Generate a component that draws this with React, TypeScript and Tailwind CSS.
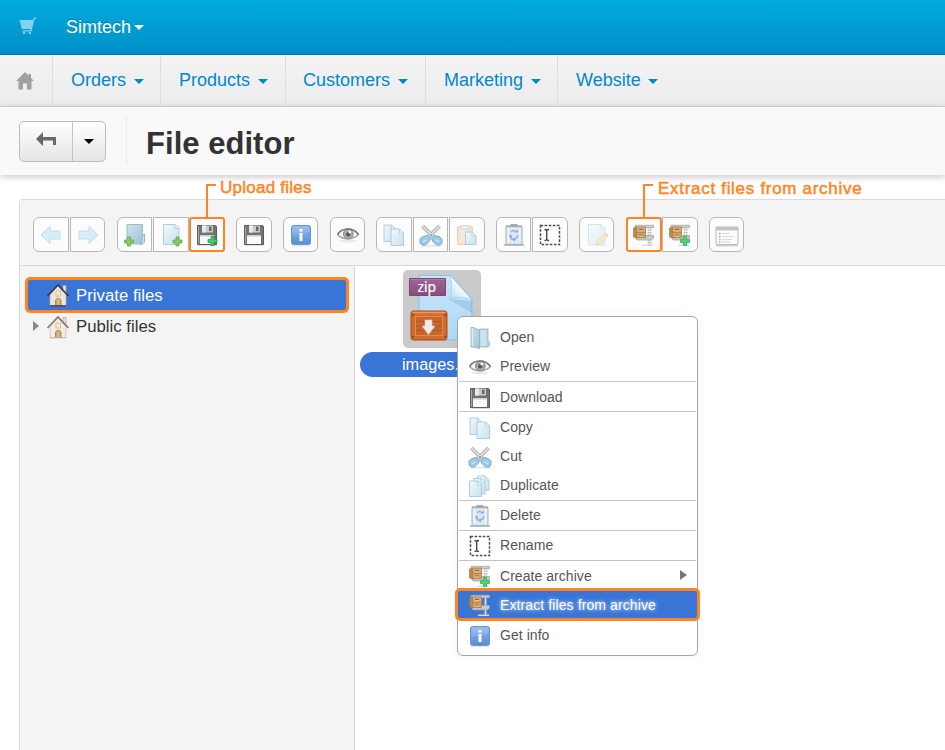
import React from "react";

type IconName =
  | "back" | "forward" | "folderAdd" | "fileAdd" | "upload" | "save" | "info" | "eye" | "copy" | "cut" | "paste"
  | "trash" | "rename" | "edit" | "extract" | "archive" | "list" | "open" | "duplicate";

function Plus({ x, y, fill = "#86c865", stroke = "#66a64c" }: { x: number; y: number; fill?: string; stroke?: string }) {
  return (
    <path
      transform={`translate(${x} ${y})`}
      d="M3.500 .5h3v3h3v3h-3v3h-3v-3h-3v-3h3z"
      fill={fill}
      stroke={stroke}
      strokeWidth=".8"
      strokeLinejoin="round"
    />
  );
}

function Floppy() {
  return (
    <g>
      <path d="M3 22.500h19" stroke="#ddd" />
      <path d="M2.500 2.500h18l1 1v18h-19z" fill="#727272" stroke="#5c5c5c" />
      <path d="M3.500 3.500v17" stroke="#a9a9a9" />
      <path d="M7 2.500h11v7H7z" fill="#c9c9c9" />
      <path d="M7 2.500h4v7H7z" fill="#e9e9e9" />
      <path d="M14 3.500h2.500V8H14z" fill="#666" />
      <path d="M5 12.500h14V21H5z" fill="#f7fafa" />
      <path d="M5 12.500h14V14H5z" fill="#dce6e6" />
    </g>
  );
}

function Sheet({ x, y, w = 12, h = 15 }: { x: number; y: number; w?: number; h?: number }) {
  return (
    <g transform={`translate(${x} ${y})`}>
      <path d={`M.5 .5H${w - 4}L${w} 4.500V${h}H.5z`} fill="url(#paper)" stroke="#a9c9dd" strokeWidth=".9" />
      <path d={`M${w - 4} .5V4.500H${w}z`} fill="#fafdff" stroke="#a9c9dd" strokeWidth=".8" />
    </g>
  );
}

function Clamp() {
  return (
    <g>
      <path d="M10 22.300h11" stroke="#dcdcdc" strokeWidth="1.500" />
      <path d="M17.500 4v18" stroke="#9b9d9f" strokeWidth="3.600" strokeDasharray="1.200 1.300" />
      <path d="M17.500 4v18" stroke="#e4e4e4" strokeWidth="1.400" />
      <path d="M3 2.300h18.500v2.400H3z" fill="#d0d0d0" stroke="#a0a0a0" strokeWidth=".7" />
      <path d="M3.500 14.500H12l1.500-2h8v2.500l-2 2H5z" fill="#c8cacb" stroke="#989b9d" strokeWidth=".7" />
      <path d="M1.500 5l3-1v11l-3-1z" fill="#b98a50" stroke="#a0703a" strokeWidth=".6" />
      <rect x="4.500" y="4" width="9" height="5.300" fill="#d8ab70" stroke="#ad7e48" strokeWidth=".8" />
      <rect x="4.500" y="9.300" width="9" height="5.400" fill="#d3a469" stroke="#ad7e48" strokeWidth=".8" />
      <path d="M7 6.700h4M7 12h4" stroke="#8b6433" strokeWidth="1.200" />
      <path d="M7 7.800h4M7 13.100h4" stroke="#f2ddb4" strokeWidth=".8" />
    </g>
  );
}

const ARROW = "M2 12L11 3.500V8h10v8H11v4.500z";

const ICONS: Record<IconName, React.ReactNode> = {
  back: <path d={ARROW} fill="#d8edf8" stroke="#bbdff0" />,
  forward: <path d={ARROW} fill="#d8edf8" stroke="#bbdff0" transform="translate(24 0) scale(-1 1)" />,
  folderAdd: (
    <g>
      <path d="M4 1.500h15.500v19.500H4z" fill="url(#folder)" stroke="#94b9cd" strokeWidth=".9" />
      <path d="M17 21.500c2-1 1.500-6 2-8.500l2.500-2v8l-2.500 2.500z" fill="#c5dce8" stroke="#8aafc5" strokeWidth=".9" />
      <Plus x={1} y={13.500} />
    </g>
  ),
  fileAdd: (
    <g>
      <Sheet x={4} y={1} w={16} h={20.500} />
      <Plus x={13.500} y={13.500} />
    </g>
  ),
  upload: (
    <g>
      <Floppy />
      <Plus x={12.500} y={13} fill="#40c873" stroke="#22a04f" />
    </g>
  ),
  save: <Floppy />,
  info: (
    <g>
      <path d="M3 22.800h18" stroke="#dce3ea" />
      <rect x="2.500" y="2.500" width="19" height="19" rx="2" fill="url(#blue)" stroke="#6795d5" />
      <path d="M3.500 13c7 0 11-3 17-4V3.500h-17z" fill="#fff" opacity=".14" />
      <path d="M10.500 10H13.500v8h-3zM10.500 6h3v2.600h-3z" fill="#fff" />
    </g>
  ),
  eye: (
    <g>
      <ellipse cx="12" cy="18" rx="9" ry="1.500" fill="#e9e9e9" />
      <path d="M1.500 11.500C6 4.500 17 4 22.500 11.500C17 17 7 17.500 1.500 11.500z" fill="#f7f7f7" stroke="#a2a2a2" strokeWidth="1.300" />
      <circle cx="12.300" cy="11" r="4.900" fill="#a9a9b0" stroke="#85858c" strokeWidth=".9" />
      <circle cx="12.300" cy="11.300" r="2.200" fill="#55555d" />
      <circle cx="13.800" cy="9" r="1.500" fill="#f4f4f4" />
      <path d="M1.500 11.500C6 4.500 17 4 22.500 11.500" stroke="#787878" strokeWidth="1.400" />
    </g>
  ),
  copy: (
    <g>
      <Sheet x={1.500} y={1.500} w={12} h={17} />
      <Sheet x={8.500} y={5.500} w={13} h={17} />
    </g>
  ),
  cut: (
    <g>
      <path d="M3 22.800h19" stroke="#dce4e9" strokeWidth="1.500" />
      <path d="M3.500 3l13 13M20.500 3L7.500 16" stroke="#a5a5a5" strokeWidth="3.800" />
      <path d="M3.500 3l13 13M20.500 3L7.500 16" stroke="#dedede" strokeWidth="2" />
      <path d="M8.500 12.500l3 3-1.500 3-3.500 3.500H3l-2-2V16l3-2.500zM15.500 12.500l-3 3 1.500 3 3.500 3.500H21l2-2V16l-3-2.500z" fill="#9ccbe6" stroke="#76acce" strokeLinejoin="round" />
      <path d="M4.500 18.500l2.500-1.500M19.500 18.500L17 17" stroke="#d3e9f5" strokeWidth="1.200" strokeLinecap="round" />
      <circle cx="12" cy="12" r=".9" fill="#888" />
    </g>
  ),
  paste: (
    <g>
      <rect x="2.500" y="3.500" width="15" height="18" rx="1" fill="#f5dfcb" stroke="#ebd0b8" />
      <rect x="4.500" y="5.500" width="11" height="14" fill="#f8e8da" />
      <path d="M6 2.500h8V6H6z" fill="#eee" stroke="#dfdad5" />
      <Sheet x={10} y={8.500} w={11} h={13} />
    </g>
  ),
  trash: (
    <g>
      <path d="M2 22h20" stroke="#b5b9bc" strokeWidth="1.800" />
      <path d="M4 3.500h16v18H4z" fill="#dbe9f3" stroke="#a4b0b8" />
      <path d="M4 3.300h16" stroke="#a6acae" strokeWidth="1.800" />
      <path d="M8.500 2h7" stroke="#8f9698" strokeWidth="1.500" />
      <path d="M6 5v14M18 5v14" stroke="#f6fcff" />
      <path d="M9 9q3-3 5 0M15.500 12q.5 3.500-3.500 4M8.500 13q.5 3 2.500 3.500" stroke="#94b0e8" strokeWidth="1.600" />
      <path d="M12.500 9.500H16V6.500zM13 14l-3 2.500 3 2zM7 14l1.500-3 2 3z" fill="#8daae8" />
    </g>
  ),
  rename: (
    <g>
      <rect x="2.500" y="2.500" width="19" height="19" stroke="#4b4b4b" strokeWidth="1.500" strokeDasharray="2.600 1.500" />
      <path d="M6.500 6.500c1.500 0 2.200.5 2.200 1.500v8c0 1-.7 1.500-2.200 1.500M11 6.500c-1.500 0-2.300.5-2.300 1.500v8c0 1 .8 1.500 2.300 1.500" stroke="#3e3e3e" strokeWidth="1.300" />
    </g>
  ),
  edit: (
    <g opacity=".5">
      <Sheet x={3} y={1} w={17} h={21} />
      <path d="M11 22l1-4 8-7 2.500 2.500-8 7z" fill="#f6dea0" stroke="#ddb77b" />
      <path d="M20 11l2.500 2.500 1-1.500-2-2z" fill="#eaa59e" />
    </g>
  ),
  extract: <Clamp />,
  archive: (
    <g>
      <Clamp />
      <Plus x={12} y={13} fill="#4ed272" stroke="#36ad58" />
    </g>
  ),
  list: (
    <g>
      <path d="M1 22.800h22" stroke="#c7c7c4" strokeWidth="1.200" />
      <rect x="1" y="4" width="22" height="17.500" rx="1" fill="#fbfbfb" stroke="#b9b9b5" />
      <path d="M1 4h22v3.500H1z" fill="#c4c4bf" />
      <path d="M7 10.500h8M7 13.500h12M7 16.500h10M7 19h8" stroke="#d9d9d9" strokeWidth="1.100" />
      <path d="M4 10.500h1.500" stroke="#73c867" strokeWidth="1.500" />
      <path d="M4 13.500h1.500" stroke="#de8a7f" strokeWidth="1.500" />
      <path d="M4 16.500h1.500" stroke="#8fb4e0" strokeWidth="1.500" />
      <path d="M4 19h1.500" stroke="#a9a9a9" strokeWidth="1.300" />
    </g>
  ),
  open: (
    <g>
      <path d="M11.500 3h8.500v12l1.500 1v3.500l-1.500 1.500h-8.500z" fill="#b6d3e2" stroke="#93b8cb" strokeWidth=".8" />
      <path d="M12.500 4h6v16h-6z" fill="#cde2ed" />
      <path d="M3 1.500h2l6.500 2.500v18.500L5 21H3z" fill="url(#folder)" stroke="#8fb4c8" strokeWidth=".9" />
      <path d="M4.300 2.500v17.500" stroke="#e7f4fa" />
    </g>
  ),
  duplicate: (
    <g>
      <Sheet x={9} y={1.500} w={12} h={15} />
      <Sheet x={5} y={4} w={12} h={16} />
      <Sheet x={1} y={6.500} w={12.500} h={16} />
    </g>
  ),
};

function Icon({ name }: { name: IconName }) {
  return (
    <svg viewBox="0 0 24 24" className="block size-6 shrink-0" fill="none">
      {ICONS[name]}
    </svg>
  );
}

function Caret({ className = "" }: { className?: string }) {
  return (
    <svg viewBox="0 0 10 5" className={`block h-[5px] w-[10px] ${className}`}>
      <path d="M0 0h10L5 5z" fill="currentColor" />
    </svg>
  );
}

function HouseIcon({ light = false }: { light?: boolean }) {
  return (
    <svg viewBox="0 0 24 24" className="size-6" fill="none">
      <path d="M17 2.500h3v8h-3z" fill="#eee3d8" stroke="#a99890" strokeWidth=".7" />
      <path d="M4 11.500L12 3l8 8.500v11H4z" fill={light ? "#f6ece1" : "#f0e4d5"} stroke="#c4b1a2" strokeWidth=".6" />
      <path d="M1.500 13L12 2l10.500 11" stroke={light ? "#867579" : "#403548"} strokeWidth="1.600" />
      <path d="M10 8h4.500v5H10z" fill="#fbf5df" stroke="#c6b08d" strokeWidth=".8" />
      <path d="M12.200 8v5" stroke="#d5c6a9" strokeWidth=".6" />
      <path d="M9.500 22.500V17q2.800-3.500 5.500 0v5.500z" fill="#d0a672" stroke="#a98258" strokeWidth=".9" />
      <path d="M12.300 16v6" stroke="#edcda0" strokeWidth=".8" />
      <path d="M4 22.800h16" stroke={light ? "#c5b8ac" : "#55302a"} strokeWidth="1.100" />
    </svg>
  );
}

const NAV = [
  { label: "Orders", width: "w-[108px] pl-[18px]" },
  { label: "Products", width: "w-[125px] pl-[18px]" },
  { label: "Customers", width: "w-[140px] pl-[17px]" },
  { label: "Marketing", width: "w-[132px] pl-[18px]" },
  { label: "Website", width: "w-[120px] pl-[18px]" },
];

const TOOLS: { gap: string; icons: IconName[] }[] = [
  { gap: "", icons: ["back", "forward"] },
  { gap: "ml-3", icons: ["folderAdd", "fileAdd", "upload"] },
  { gap: "ml-[11px]", icons: ["save"] },
  { gap: "ml-[11px]", icons: ["info"] },
  { gap: "ml-3", icons: ["eye"] },
  { gap: "ml-[11px]", icons: ["copy", "cut", "paste"] },
  { gap: "ml-[11px]", icons: ["trash", "rename"] },
  { gap: "ml-[11px]", icons: ["edit"] },
  { gap: "ml-3", icons: ["extract", "archive"] },
  { gap: "ml-[11px]", icons: ["list"] },
];

const WIDTH: Partial<Record<IconName, string>> = {
  back: "w-[36px] mr-px", folderAdd: "w-[35px] mr-px", save: "w-[36px]", copy: "w-[36px] mr-px", cut: "w-[35px] mr-px",
  paste: "w-[36px]", trash: "w-[35px] mr-px", rename: "w-[36px]", fileAdd: "w-[36px]", upload: "w-[36px]",
  extract: "w-[36px]", archive: "w-[36px]",
};

function ToolButton({ name, first, last }: { name: IconName; first: boolean; last: boolean }) {
  const marked = name === "upload" || name === "extract";
  const border = marked ? "border-2 border-[#ff8522] rounded-[3px]" : "border border-[#b7b7b7]";
  const corners = marked ? "" : `${first ? "rounded-l-[6px]" : ""} ${last ? "rounded-r-[6px]" : ""}`;
  return (
    <button className={`flex h-[35px] shrink-0 items-center justify-center bg-[#fcfcfc] ${WIDTH[name] ?? "w-[35px]"} ${border} ${corners}`}>
      <Icon name={name} />
    </button>
  );
}

const MENU: { icon: IconName; label: string; row: string; line?: string }[] = [
  { icon: "open", label: "Open", row: "h-[29px]" },
  { icon: "eye", label: "Preview", row: "h-[29px]", line: "" },
  { icon: "save", label: "Download", row: "h-[29px] pt-[2px]", line: "" },
  { icon: "copy", label: "Copy", row: "h-[29px] pt-[2px]" },
  { icon: "cut", label: "Cut", row: "h-[29px] pt-[2px]" },
  { icon: "duplicate", label: "Duplicate", row: "h-[29px] pt-[2px]", line: "mt-px" },
  { icon: "trash", label: "Delete", row: "h-[29px]", line: "" },
  { icon: "rename", label: "Rename", row: "h-[29px]", line: "" },
  { icon: "archive", label: "Create archive", row: "mt-px h-[28px]" },
  { icon: "extract", label: "Extract files from archive", row: "" },
  { icon: "info", label: "Get info", row: "h-[29px]" },
];

function ContextMenu() {
  return (
    <div className="absolute left-[457px] top-[316px] z-10 h-[340px] w-[241px] rounded-[6px] border border-[#a6a6a6] bg-white pt-[6px] shadow-[0_0_12px_#0000000c]">
      {MENU.map((item) => {
        const active = item.icon === "extract";
        return (
          <React.Fragment key={item.label}>
            <div
              className={
                active
                  ? "relative -mx-[3px] -mt-[2px] flex h-[33px] items-center rounded-[5px] border-[3px] border-[#ff8522] bg-[#3875d7] pl-[10px] text-[14px] text-white [text-shadow:0_0_4px_#fff]"
                  : `flex items-center pl-[10px] text-[14px] tracking-[0.050px] text-[#555] ${item.row}`
              }
            >
              <Icon name={item.icon} />
              <span className={`ml-2 ${active ? "mt-[2px] tracking-[0.100px]" : ""}`}>{item.label}</span>
              {item.icon === "archive" && (
                <svg viewBox="0 0 7 10" className="mb-[2px] ml-auto mr-[10px] h-[10px] w-[7px]">
                  <path d="M0 0l7 5-7 5z" fill="#777" />
                </svg>
              )}
            </div>
            {item.line !== undefined && <div className={`ml-px mr-px h-px bg-[#c5c5c5] ${item.line}`} />}
          </React.Fragment>
        );
      })}
    </div>
  );
}

function ZipIcon() {
  return (
    <svg viewBox="0 0 78 78" className="size-[78px]">
      <path d="M16 5.500h32l21 23.500v41H16z" fill="url(#zipPaper)" stroke="#89bfe1" />
      <path d="M45 29l24 2v12z" fill="#5b9cc6" opacity=".28" />
      <path d="M47.500 5.500C49 17 49 25 46 29c8-3 15-2 23 1z" fill="url(#fold)" stroke="#9dc9e3" strokeWidth=".7" />
      <path d="M6.500 8.500h36v17h-36z" fill="url(#zipTag)" stroke="#7d4675" />
      <path d="M7 9.500h35" stroke="#ae7ba5" />
      <text x="14.500" y="22" fontSize="13.800" fontFamily="Noto Sans, sans-serif" fill="#fff" stroke="#fff" strokeWidth=".2">zip</text>
      <rect x="8" y="41" width="36" height="29" rx="2.500" fill="#d36b2d" stroke="#a84b1c" />
      <path d="M9.500 42.500h33" stroke="#f09a5b" strokeWidth="1.500" />
      <rect x="12.500" y="46.500" width="27" height="19" fill="#c6662c" stroke="#e4894c" />
      <path d="M13 51.500h26M13 56h26M13 60.500h26" stroke="#ad5321" strokeWidth=".8" />
      <path d="M9.500 45h1.500M41.500 45h1.500M9.500 67h1.500M41.500 67h1.500" stroke="#6d3217" strokeWidth="1.500" />
      <path d="M22 50h7v6h3l-6.500 8.500L19 56h3z" fill="#f0ecea" stroke="#d8c8bc" strokeWidth=".7" />
    </svg>
  );
}

export default function App() {
  return (
    <div className="relative flex h-[750px] w-[945px] flex-col overflow-hidden bg-white font-['Liberation_Sans',Arial,sans-serif] text-[#333]">
      <svg className="absolute size-0">
        <defs>
          <linearGradient id="paper" x1="0" y1="0" x2="1" y2="1"><stop stopColor="#f0f8fd" /><stop offset="1" stopColor="#c9e1ef" /></linearGradient>
          <linearGradient id="folder" x1="0" y1="0" x2="1" y2="1"><stop stopColor="#cfe3ed" /><stop offset="1" stopColor="#9dc3d7" /></linearGradient>
          <linearGradient id="blue" x1="0" y1="0" x2="0" y2="1"><stop stopColor="#8bb4ea" /><stop offset="1" stopColor="#578fd7" /></linearGradient>
          <linearGradient id="zipPaper" x1="0" y1="0" x2="0" y2="1"><stop stopColor="#c5e5fa" /><stop offset="1" stopColor="#b1daf5" /></linearGradient>
          <linearGradient id="zipTag" x1="0" y1="0" x2="0" y2="1"><stop stopColor="#9f6596" /><stop offset="1" stopColor="#864e7d" /></linearGradient>
          <linearGradient id="fold" x1="0" y1="1" x2="1" y2="0"><stop stopColor="#b7daed" /><stop offset=".5" stopColor="#f1faff" /><stop offset="1" stopColor="#b7def5" /></linearGradient>
        </defs>
      </svg>

      <header className="flex h-[55px] shrink-0 items-center border-b border-[#0076a9] bg-gradient-to-b from-[#00abdb] to-[#008fc9] pl-[19px] text-white">
        <svg viewBox="0 0 18 18" className="mb-[3px] h-[18px] w-[18px]" fill="#82d2ed">
          <path d="M.5 3h13.200L14.700.5H17.500v1.300h-2L12.500 14.500H3.500v-1.200h7.800l.3-1.300H2.800z" />
          <circle cx="5" cy="16" r="1.200" /><circle cx="10.800" cy="16" r="1.200" />
        </svg>
        <span className="ml-[29px] text-[18px] [text-shadow:0_-1px_0_#00000040]">Simtech</span>
        <Caret className="ml-[3px]" />
      </header>

      <nav className="flex h-[52px] shrink-0 border-b border-[#d4d4d4] bg-gradient-to-b from-[#f4f4f4] to-[#ebebeb]">
        <div className="flex w-[53px] items-center border-r border-[#dedede] pl-4">
          <svg viewBox="0 0 18 18" className="h-[18px] w-[18px]" fill="#a0a0a0">
            <path d="M9 0L0 9h2.500v8.500H7v-6h4v6h4.500V9H18l-3-3V2h-2.500v1.500z" />
          </svg>
        </div>
        {NAV.map((item, index) => (
          <div
            key={item.label}
            className={`flex shrink-0 items-center pb-px text-[18px] text-[#0088cc] ${item.width} ${index < 4 ? "border-r border-[#dedede]" : ""}`}
          >
            {item.label}
            <Caret className="ml-[7.500px] mt-[3px]" />
          </div>
        ))}
      </nav>

      <section className="z-[1] flex h-[68px] shrink-0 items-center bg-[#f9f9f9] pl-[19px] shadow-[0_2px_7px_#00000038]">
        <div className="flex h-[41px] w-[87px] overflow-hidden rounded-[5px] border border-[#bdbdbd] bg-gradient-to-b from-white to-[#e5e5e5]">
          <button className="flex w-[53px] items-center justify-center border-r border-[#c4c4c4]">
            <svg viewBox="0 0 20 14" className="mb-1 h-[14px] w-5"><path d="M0 7l7-7v5h13v8h-3V8.500H7V14z" fill="#696969" /></svg>
          </button>
          <button className="flex flex-1 items-center justify-center text-black"><Caret /></button>
        </div>
        <div className="ml-5 h-[48px] w-px bg-[#eaeaea]" />
        <h1 className="ml-[19px] mt-[5px] text-[31px] font-bold leading-none tracking-[0.040px]">File editor</h1>
      </section>

      <main className="ml-[19px] mt-[24px] flex min-h-0 flex-1 flex-col rounded-tl-[4px] border-l border-t border-[#d9d9d9]">
        <div className="flex h-[66px] shrink-0 items-center border-b border-[#d9d9d9] bg-[#f4f4f4] pl-[13px] pt-[4px]">
          {TOOLS.map((group) => (
            <div key={group.icons[0]} className={`flex ${group.gap}`}>
              {group.icons.map((name, i) => (
                <ToolButton key={name} name={name} first={i === 0} last={i === group.icons.length - 1} />
              ))}
            </div>
          ))}
        </div>
        <div className="flex min-h-0 flex-1">
          <aside className="w-[335px] shrink-0 border-r border-[#d9d9d9] bg-[#f4f4f4] pl-[5px] pt-[11px]">
            <div className="flex h-[36px] w-[324px] items-center rounded-[5px] border-[3px] border-[#ff8522] bg-[#3875d7] pl-[18px] text-[16.800px] text-white">
              <HouseIcon />
              <span className="ml-[6px] mt-px">Private files</span>
            </div>
            <div className="flex h-[28px] items-center pl-2 text-[16.800px]">
              <svg viewBox="0 0 6 10" className="mb-[2px] mr-[7px] h-[10px] w-[6px]"><path d="M0 0l6 5-6 5z" fill="#888" /></svg>
              <HouseIcon light />
              <span className="ml-[6px]">Public files</span>
            </div>
          </aside>
          <section className="flex-1 pl-[5px] pt-[4px]">
            <div className="flex w-[164px] flex-col items-center">
              <div className="size-[78px] rounded-[5px] bg-[#cacaca]"><ZipIcon /></div>
              <div className="mt-1 flex h-[25px] w-full items-center rounded-full bg-[#3875d7] pl-[42px] text-[16.300px] text-white">images.zip</div>
            </div>
          </section>
        </div>
      </main>

      <div className="absolute left-[206px] top-[184px] z-10 h-[33px] w-[10px] border-l-2 border-t-2 border-[#ff8522]" />
      <div className="absolute left-[220px] top-[178px] z-10 whitespace-nowrap text-[17px] leading-[20px] tracking-[0.250px] text-[#ff8522] [-webkit-text-stroke:0.500px_#ff8522]">Upload files</div>
      <div className="absolute left-[643px] top-[184px] z-10 h-[33px] w-[10px] border-l-2 border-t-2 border-[#ff8522]" />
      <div className="absolute left-[658px] top-[179px] z-10 whitespace-nowrap text-[17px] leading-[20px] tracking-[0.700px] text-[#ff8522] [-webkit-text-stroke:0.500px_#ff8522]">Extract files from archive</div>
      <ContextMenu />
    </div>
  );
}
